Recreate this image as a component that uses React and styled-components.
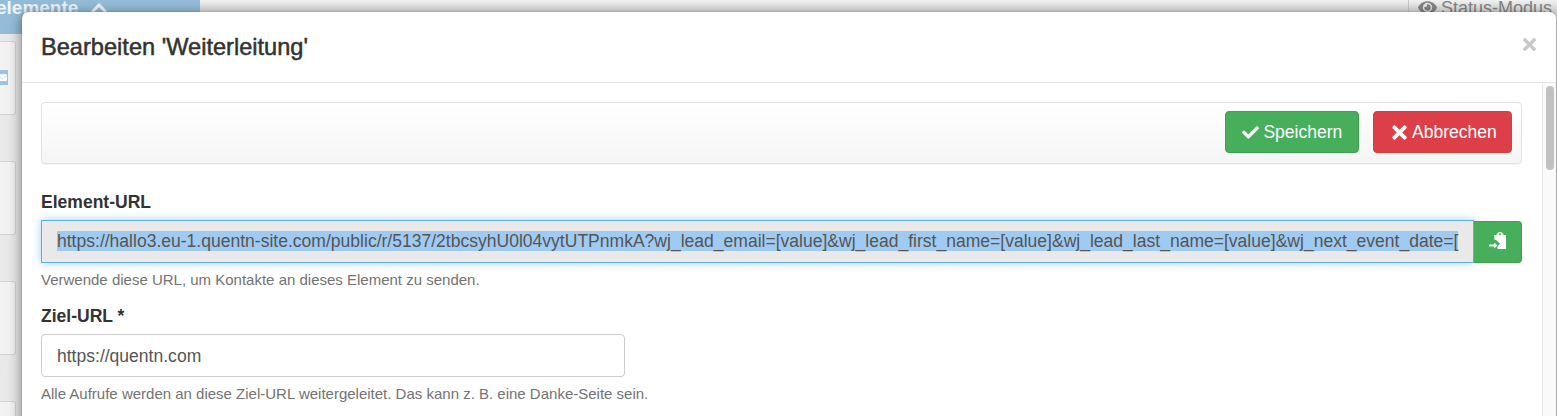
import React from 'react';
import styled, { createGlobalStyle } from 'styled-components';
import { FaCheck, FaTimes, FaEye, FaChevronUp, FaEnvelope } from 'react-icons/fa';

const GlobalStyle = createGlobalStyle`
  html, body {
    margin: 0;
    padding: 0;
    height: 416px;
    overflow: hidden;
    background: #e9e9e9;
    font-family: "Liberation Sans", Arial, sans-serif;
  }
  ::selection {
    background: #9fcbf2;
  }
`;

const Page = styled.div`
  position: relative;
  width: 1557px;
  height: 416px;
  overflow: hidden;
  background: #e9e9e9;
`;

const TopBar = styled.div`
  display: flex;
  justify-content: space-between;
  height: 34px;
  background: linear-gradient(#f1f1f1, #d6d6d6 14px, #e9e9e9 14px);
`;

const BlueTab = styled.div`
  display: flex;
  gap: 12px;
  width: 200px;
  height: 34px;
  overflow: hidden;
  background: #94bcd8;
  color: #eef5fa;
  font-size: 19px;
  font-weight: bold;
  line-height: 15px;
  white-space: nowrap;

  span {
    margin-left: -4px;
  }

  svg {
    margin-top: -1px;
    font-size: 18px;
  }
`;

const StatusMode = styled.div`
  display: flex;
  gap: 4px;
  width: 149px;
  height: 14px;
  box-sizing: border-box;
  padding-left: 9px;
  border-left: 1px solid #c8c8c8;
  color: #858585;
  font-size: 18px;
  line-height: 16px;
  white-space: nowrap;

  svg {
    font-size: 19px;
    margin-top: -2px;
  }
`;

const SideStrip = styled.div`
  display: flex;
  flex-direction: column;
  gap: 46px;
  width: 16px;
  padding-top: 7px;
`;

const SideCard = styled.div`
  position: relative;
  height: 74px;
  box-sizing: border-box;
  border: 1px solid #d2d2d2;
  border-left: 0;
  border-radius: 0 3px 3px 0;
  background: #f2f2f2;
`;

const SideBadge = styled.span`
  position: absolute;
  top: 28px;
  right: 7px;
  display: flex;
  align-items: center;
  justify-content: flex-end;
  width: 16px;
  height: 15px;
  padding-right: 1px;
  box-sizing: border-box;
  background: #9cc4e2;
  color: #fff;
  font-size: 9px;
`;

const SideNote = styled.span`
  position: absolute;
  top: 76px;
  left: -8px;
  font-size: 15px;
  color: #8d8d8d;
`;

const Modal = styled.div`
  position: absolute;
  top: 12px;
  left: 22px;
  width: 1534px;
  height: 420px;
  background: #fff;
  border-radius: 6px 6px 0 0;
  box-shadow: 0 0 1px rgba(0, 0, 0, 0.6), 0 3px 14px rgba(0, 0, 0, 0.5);
  color: #333;
`;

const ModalHeader = styled.div`
  display: flex;
  align-items: center;
  justify-content: space-between;
  height: 71px;
  box-sizing: border-box;
  padding: 0 17px 0 19px;
  border-bottom: 1px solid #e5e5e5;
`;

const ModalTitle = styled.h4`
  margin: 0;
  font-size: 23.6px;
  font-weight: normal;
  -webkit-text-stroke: 0.5px #333;
  color: #333;
`;

const CloseIcon = styled.span`
  display: flex;
  color: #c9c9c9;
  font-size: 19px;
  margin-top: -6px;
`;

const ModalBody = styled.div`
  display: flex;
  height: 334px;
`;

const Content = styled.div`
  flex: 1;
  padding: 19px 20px 0 19px;
`;

const Scrollbar = styled.div`
  width: 14px;
  border-left: 1px solid #e8e8e8;
  background: #fafafa;
  padding: 3px 0 0 3px;
  box-sizing: border-box;
`;

const ScrollThumb = styled.div`
  width: 8px;
  height: 84px;
  border-radius: 4px;
  background: #c1c1c1;
`;

const ActionBar = styled.div`
  display: flex;
  justify-content: flex-end;
  align-items: center;
  gap: 14px;
  height: 62px;
  box-sizing: border-box;
  padding: 0 9px 2px 0;
  border: 1px solid #e3e3e3;
  border-radius: 4px;
  background: linear-gradient(#fff, #f5f5f5);
  box-shadow: 0 1px 1px rgba(0, 0, 0, 0.05);
  margin-bottom: 28px;
`;

const ActionButton = styled.button`
  display: flex;
  align-items: center;
  justify-content: center;
  gap: ${(p) => (p.$danger ? 2 : 4)}px;
  width: ${(p) => (p.$danger ? 139 : 134)}px;
  height: 42px;
  padding: 0;
  border: 1px solid ${(p) => (p.$danger ? '#d43f3a' : '#3fa04f')};
  border-radius: 4px;
  background: ${(p) => (p.$danger ? '#dc3f48' : '#47ae5b')};
  color: #fff;
  font-family: inherit;
  font-size: 17.55px;
`;

const Label = styled.label`
  display: block;
  font-size: 17.55px;
  font-weight: bold;
  line-height: 20px;
  margin-bottom: 8px;
`;

const InputGroup = styled.div`
  display: flex;
`;

const UrlField = styled.div`
  flex: 1;
  height: 43px;
  box-sizing: border-box;
  padding: 0 15px;
  border: 1px solid #57b0ec;
  background: #e9e9e9;
  box-shadow: 0 0 8px rgba(102, 175, 233, 0.6);
  font-size: 17.55px;
  line-height: 41px;
  color: #555;
  white-space: nowrap;
  overflow: hidden;
`;

const Selected = styled.span`
  background: #9fcbf2;
`;

const CopyButton = styled.button`
  display: flex;
  align-items: center;
  justify-content: center;
  width: 48px;
  height: 42px;
  margin-top: 1px;
  padding: 0 0 2px;
  border: 1px solid #3fa04f;
  border-left: 0;
  border-radius: 0 4px 4px 0;
  background: #47ae5b;
`;

const HelpText = styled.p`
  margin: 7px 0 16px;
  font-size: 15px;
  line-height: 20px;
  color: #737373;
`;

const TextInput = styled.input`
  display: block;
  width: 584px;
  height: 43px;
  box-sizing: border-box;
  padding: 2px 15px 0;
  border: 1px solid #ccc;
  border-radius: 4px;
  background: #fff;
  font-family: inherit;
  font-size: 17.55px;
  color: #555;
`;

const PasteIcon = () => (
  <svg width="18" height="18" viewBox="0 0 18 18" fill="#fff">
    <path
      fillRule="evenodd"
      d="M5 3h2.5C8 1 9.5 0 11 0s3 1 3.5 3H17v14H8.5v-2.5l2.5-3L7 8H5.6zM11 1.3a1 1 0 1 0 0 2 1 1 0 0 0 0-2z"
    />
    <path d="M0 12.6h5.2v-2.2l3.3 3.1-3.3 3.1v-2.2H0z" />
  </svg>
);

const App = () => {
  return (
    <>
      <GlobalStyle />
      <Page>
        <TopBar>
          <BlueTab>
            <span>elemente</span>
            <FaChevronUp />
          </BlueTab>
          <StatusMode>
            <FaEye />
            <span>Status-Modus</span>
          </StatusMode>
        </TopBar>
        <SideStrip>
          <SideCard>
            <SideBadge>
              <FaEnvelope />
            </SideBadge>
          </SideCard>
          <SideCard />
          <SideCard>
            <SideNote>n</SideNote>
          </SideCard>
          <SideCard />
        </SideStrip>
        <Modal>
          <ModalHeader>
            <ModalTitle>Bearbeiten 'Weiterleitung'</ModalTitle>
            <CloseIcon>
              <FaTimes />
            </CloseIcon>
          </ModalHeader>
          <ModalBody>
            <Content>
              <ActionBar>
                <ActionButton type="button">
                  <FaCheck size={17} />
                  Speichern
                </ActionButton>
                <ActionButton type="button" $danger>
                  <FaTimes size={21} />
                  Abbrechen
                </ActionButton>
              </ActionBar>
              <Label>Element-URL</Label>
              <InputGroup>
                <UrlField>
                  <Selected>
                    https://hallo3.eu-1.quentn-site.com/public/r/5137/2tbcsyhU0l04vytUTPnmkA?wj_lead_email=[value]&amp;wj_lead_first_name=[value]&amp;wj_lead_last_name=[value]&amp;wj_next_event_date=[
                  </Selected>
                </UrlField>
                <CopyButton type="button">
                  <PasteIcon />
                </CopyButton>
              </InputGroup>
              <HelpText>Verwende diese URL, um Kontakte an dieses Element zu senden.</HelpText>
              <Label>Ziel-URL *</Label>
              <TextInput defaultValue="https://quentn.com" />
              <HelpText>Alle Aufrufe werden an diese Ziel-URL weitergeleitet. Das kann z. B. eine Danke-Seite sein.</HelpText>
            </Content>
            <Scrollbar>
              <ScrollThumb />
            </Scrollbar>
          </ModalBody>
        </Modal>
      </Page>
    </>
  );
};

export default App;
